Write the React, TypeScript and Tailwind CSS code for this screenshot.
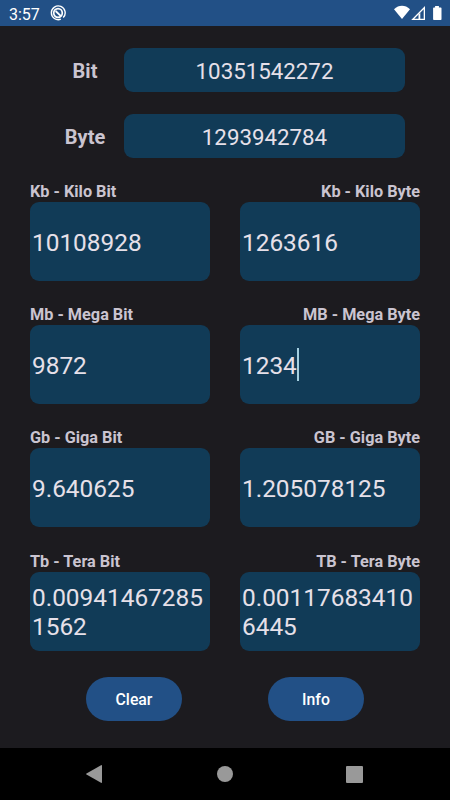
type UnitFieldProps = {
  label: string;
  value: string;
  alignRight?: boolean;
  focused?: boolean;
};

const units = [
  { bit: "Kb - Kilo Bit", bitValue: "10108928", byte: "Kb - Kilo Byte", byteValue: "1263616" },
  { bit: "Mb - Mega Bit", bitValue: "9872", byte: "MB - Mega Byte", byteValue: "1234", focused: true },
  { bit: "Gb - Giga Bit", bitValue: "9.640625", byte: "GB - Giga Byte", byteValue: "1.205078125" },
  { bit: "Tb - Tera Bit", bitValue: "0.009414672851562", byte: "TB - Tera Byte", byteValue: "0.001176834106445" },
];

function StatusBar() {
  return (
    <header className="flex h-[26px] items-center bg-[#225086] pr-[8px] pl-[9px] text-white">
      <span className="pt-[3px] text-[16px] leading-[23px]">3:57</span>
      <svg className="ml-[10px]" width="16" height="16" viewBox="0 0 16 16" fill="none" stroke="currentColor">
        <path d="M10.8 14.2A6.9 6.9 0 1 1 13.2 12.6" strokeWidth="1.4" />
        <circle cx="8" cy="8" r="4.3" strokeWidth="1.7" />
        <path d="M5.6 6L11.2 11.4" strokeWidth="1.8" />
      </svg>
      <div className="ml-auto flex items-center">
        <svg width="48" height="16" viewBox="0 0 48 16" fill="currentColor">
          <path d="M0 4.2C4.8 -0.4 11.2 -0.4 16 4.2L8 14Z" />
          <path d="M31 1V15H17.2Z M29.7 4.2L20.3 13.7H24.5V9.7L26.3 8V13.7H29.7Z" fillRule="evenodd" />
          <path d="M41.1 1H44.9V2.4H46.7Q47.5 2.4 47.5 3.2V14.2Q47.5 15 46.7 15H39.9Q39.1 15 39.1 14.2V3.2Q39.1 2.4 39.9 2.4H41.1Z" />
        </svg>
      </div>
    </header>
  );
}

function TopField({ label, value }: { label: string; value: string }) {
  return (
    <div className="flex h-[44px] items-center">
      <span className="w-[79px] pt-[2px] pl-px text-center text-[20px] font-bold text-[#cac4d0]">{label}</span>
      <div className="flex h-full w-[281px] items-center justify-center rounded-[9px] bg-[#113b57] pt-[3px] text-[22.3px] text-[#e6e0e9]">
        {value}
      </div>
    </div>
  );
}

function UnitField({ label, value, alignRight, focused }: UnitFieldProps) {
  return (
    <div className="w-[180px]">
      <p className={`h-[20px] text-[16.25px] leading-[20px] font-bold text-[#cac4d0] ${alignRight ? "text-right" : ""}`}>
        {label}
      </p>
      <div className="flex h-[79px] items-center rounded-[9px] bg-[#113b57] px-[2px]">
        <span className="pt-[3px] text-[24.4px] leading-[28.5px] break-all text-[#e6e0e9]">{value}</span>
        {focused && <span className="h-[33px] w-[2px] bg-[#a5cfe0]" />}
      </div>
    </div>
  );
}

export default function App() {
  return (
    <div className="flex h-[800px] w-[450px] flex-col overflow-hidden bg-[#1c1b1f] font-['Roboto',sans-serif]">
      <StatusBar />

      <main className="flex-1 pt-[22px]">
        <div className="flex flex-col gap-[22px] pl-[45px]">
          <TopField label="Bit" value="10351542272" />
          <TopField label="Byte" value="1293942784" />
        </div>

        <div className="mt-[24px] flex flex-col gap-[24.2px] px-[30px]">
          {units.map((unit) => (
            <div key={unit.bit} className="flex justify-between">
              <UnitField label={unit.bit} value={unit.bitValue} />
              <UnitField label={unit.byte} value={unit.byteValue} alignRight focused={unit.focused} />
            </div>
          ))}
        </div>

        <div className="mt-[26.4px] flex justify-between px-[86px]">
          <button className="h-[44px] w-[96px] rounded-full bg-[#225086] pt-[2px] text-[15.8px] font-medium text-white">
            Clear
          </button>
          <button className="h-[44px] w-[96px] rounded-full bg-[#225086] pt-[2px] text-[15.8px] font-medium text-white">
            Info
          </button>
        </div>
      </main>

      <nav className="flex h-[52px] items-center justify-between bg-black pr-[87px] pl-[86px] text-[#999999]">
        <svg width="16" height="18" viewBox="0 0 16 18" fill="currentColor">
          <path d="M15 0.2Q16 -0.2 16 1V17Q16 18.2 15 17.8L0.5 9.6Q-0.3 9 0.5 8.4Z" />
        </svg>
        <span className="ml-[2px] h-[16px] w-[16px] rounded-full bg-[#999999]" />
        <span className="h-[17px] w-[17px] rounded-[1px] bg-[#999999]" />
      </nav>
    </div>
  );
}
